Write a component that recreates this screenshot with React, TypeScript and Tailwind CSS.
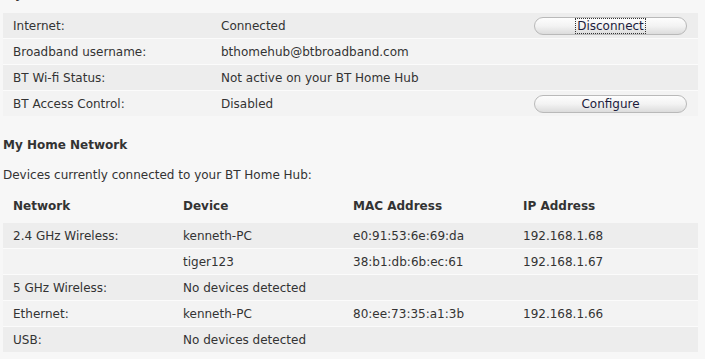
import React from "react";

const font = { fontFamily: '"DejaVu Sans", Verdana, sans-serif' };

function Btn({ label, focus }: { label: string; focus?: boolean }) {
  return (
    <button className="h-[18px] w-[153px] rounded-[9px] border border-[#b9b9b9] bg-gradient-to-b from-[#fdfdfd] via-[#f3f3f3] to-[#dcdcdc] text-[12px] leading-[14px] text-[#1c1c3c] flex items-center justify-center">
      <span className={focus ? "outline outline-1 outline-dotted outline-[#333] px-[1px]" : ""}>{label}</span>
    </button>
  );
}

export default function App() {
  const top = [
    { l: "Internet:", v: "Connected", b: "Disconnect", f: true },
    { l: "Broadband username:", v: "bthomehub@btbroadband.com" },
    { l: "BT Wi-fi Status:", v: "Not active on your BT Home Hub" },
    { l: "BT Access Control:", v: "Disabled", b: "Configure" },
  ];
  const devs = [
    ["2.4 GHz Wireless:", "kenneth-PC", "e0:91:53:6e:69:da", "192.168.1.68"],
    ["", "tiger123", "38:b1:db:6b:ec:61", "192.168.1.67"],
    ["5 GHz Wireless:", "No devices detected", "", ""],
    ["Ethernet:", "kenneth-PC", "80:ee:73:35:a1:3b", "192.168.1.66"],
    ["USB:", "No devices detected", "", ""],
  ];
  return (
    <div className="w-[705px] h-[359px] overflow-hidden bg-[#f7f7f7] text-[12px] text-[#333]" style={font}>
      <div className="h-[13px] relative overflow-hidden">
        <div className="absolute left-[3px] top-[-13px] font-bold text-[12px] leading-[15px]">My Hub</div>
      </div>
      <div className="w-[695px] ml-[3px] flex flex-col">
        {top.map((r, i) => (
          <div
            key={i}
            className={`flex items-center ${i > 0 ? "h-[26px] border-t border-[#fbfbfb]" : "h-[25px]"} ${i % 2 === 0 ? "bg-[#ededed]" : "bg-[#f3f3f3]"}`}
          >
            <div className="w-[208px] pl-[10px]">{r.l}</div>
            <div className="flex-1 pl-[10px]">{r.v}</div>
            <div className="w-[164px] flex">{r.b ? <Btn label={r.b} focus={r.f} /> : null}</div>
          </div>
        ))}
      </div>
      <div className="ml-[3px] mt-[22px] font-bold text-[12px] leading-[15px]">My Home Network</div>
      <div className="ml-[3px] mt-[15px] leading-[15px]">Devices currently connected to your BT Home Hub:</div>
      <div className="w-[695px] ml-[3px] mt-[10px] flex flex-col">
        <div className="flex items-center h-[30px] pb-[4px] font-bold">
          <div className="w-[170px] pl-[10px]">Network</div>
          <div className="w-[170px] pl-[10px]">Device</div>
          <div className="w-[170px] pl-[10px]">MAC Address</div>
          <div className="flex-1 pl-[10px]">IP Address</div>
        </div>
        {devs.map((r, i) => (
          <div
            key={i}
            className={`flex items-center ${i > 0 ? "h-[26px] border-t border-[#fbfbfb]" : "h-[25px]"} ${i % 2 === 0 ? "bg-[#ededed]" : "bg-[#f3f3f3]"}`}
          >
            <div className="w-[170px] pl-[10px]">{r[0]}</div>
            <div className="w-[170px] pl-[10px]">{r[1]}</div>
            <div className="w-[170px] pl-[10px]">{r[2]}</div>
            <div className="flex-1 pl-[10px]">{r[3]}</div>
          </div>
        ))}
      </div>
    </div>
  );
}
